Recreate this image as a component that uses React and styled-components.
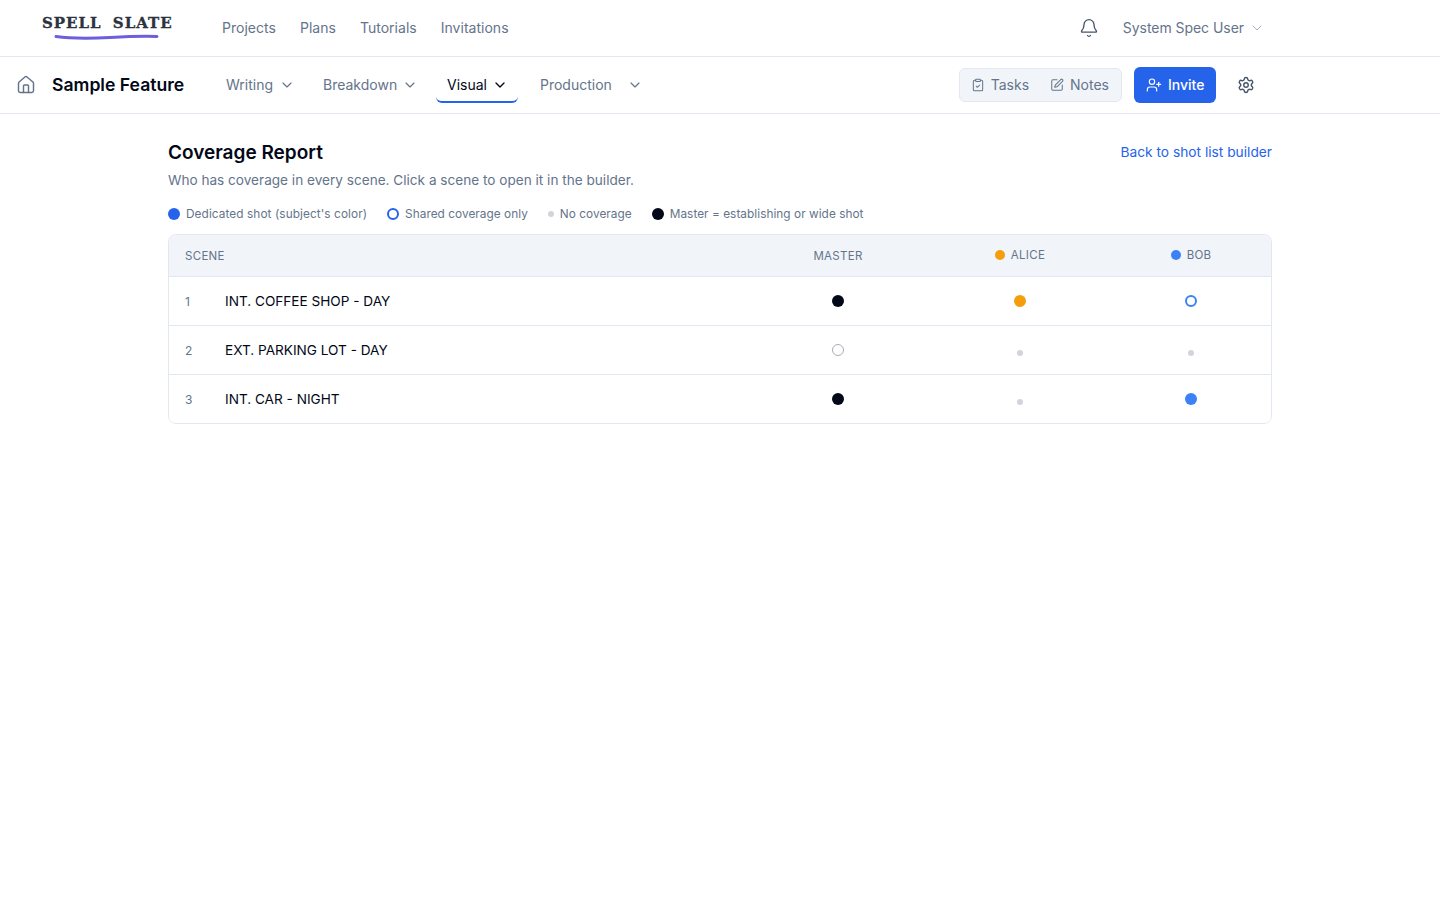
import React from "react";
import styled, { createGlobalStyle } from "styled-components";
import {
  Bell,
  ChevronDown,
  ClipboardCheck,
  House,
  Settings,
  SquarePen,
  UserPlus,
} from "lucide-react";

const GlobalStyle = createGlobalStyle`
  * { box-sizing: border-box; }
  body {
    margin: 0;
    background: #ffffff;
    color: #020817;
    font-family: Inter, "Liberation Sans", sans-serif;
  }
`;

const TopBar = styled.header`
  display: flex;
  align-items: center;
  height: 57px;
  padding: 0 175px 0 42px;
  border-bottom: 1px solid #e2e8f0;
`;

const Logo = styled.a`
  position: relative;
  display: block;
  width: 130px;
  margin: -11px 50px 0 0;
  font-family: "DejaVu Serif", serif;
  font-size: 15px;
  font-weight: 700;
  line-height: 20px;
  letter-spacing: 1px;
  word-spacing: 5px;
  white-space: pre;
  color: #2b3240;
  -webkit-text-stroke: 0.3px #2b3240;

  svg {
    position: absolute;
    left: 12px;
    top: 20px;
  }
`;

const MainNav = styled.nav`
  display: flex;
  gap: 24px;
  flex: 1;
  padding-bottom: 1px;
`;

const MainLink = styled.a`
  font-size: 14px;
  letter-spacing: 0.02px;
  color: #64748b;
`;

const UserArea = styled.div`
  display: flex;
  align-items: center;
  gap: 5px;
  color: #64748b;
  font-size: 14px;

  > svg:first-child {
    margin-right: 19px;
    color: #475569;
  }
`;

const UserName = styled.span`
  padding-bottom: 1px;
  letter-spacing: -0.05px;
`;

const SubBar = styled.div`
  display: flex;
  align-items: center;
  height: 57px;
  padding: 0 185px 0 16px;
  border-bottom: 1px solid #e2e8f0;
`;

const HomeButton = styled.a`
  display: flex;
  color: #64748b;
  margin-right: 16px;
`;

const FeatureTitle = styled.h2`
  margin: 0 31px 0 0;
  width: 132px;
  padding-bottom: 1px;
  font-size: 17.6px;
  font-weight: 600;
  white-space: nowrap;
`;

const Tabs = styled.nav`
  display: flex;
  align-items: center;
  flex: 1;
`;

const Tab = styled.a`
  display: flex;
  align-items: center;
  justify-content: space-between;
  flex: none;
  width: ${(p) => p.$width}px;
  height: 36px;
  margin-right: ${(p) => p.$gap}px;
  padding: 0 10px 0 11px;
  font-size: 14px;
  color: ${(p) => (p.$active ? "#020817" : "#64748b")};
  border-bottom: 2px solid ${(p) => (p.$active ? "#2563eb" : "transparent")};
  border-radius: 0 0 6px 6px;

  svg {
    flex: none;
    margin-top: 1px;
  }
`;

const Toggle = styled.div`
  display: flex;
  align-items: center;
  height: 34px;
  margin-right: 12px;
  padding: 0 12px 0 11px;
  gap: 21px;
  background: #f1f5f9;
  border: 1px solid #e2e8f0;
  border-radius: 6px;
`;

const ToggleItem = styled.a`
  display: flex;
  align-items: center;
  gap: 6px;
  font-size: 14px;
  line-height: 18px;
  padding-bottom: 1px;
  color: #64748b;

  svg {
    margin-top: 1px;
  }
`;

const InviteButton = styled.button`
  display: flex;
  align-items: center;
  gap: 6px;
  width: 82px;
  height: 36px;
  margin-right: 21px;
  padding: 0 0 1px 12px;
  border: none;
  border-radius: 6px;
  background: #2563eb;
  color: #ffffff;
  font-family: inherit;
  font-size: 14px;
  font-weight: 500;

  svg {
    margin-top: 1px;
  }
`;

const GearButton = styled.a`
  display: flex;
  color: #475569;
`;

const Page = styled.main`
  max-width: 1152px;
  margin: 0 auto;
  padding: 24px 24px 0;
`;

const HeadRow = styled.div`
  display: flex;
  justify-content: space-between;
  align-items: flex-start;
`;

const Title = styled.h1`
  margin: 0;
  padding-top: 1px;
  font-size: 19px;
  font-weight: 600;
  line-height: 28px;
`;

const Subtitle = styled.p`
  margin: 3px 0 0;
  font-size: 13.6px;
  line-height: 20px;
  color: #64748b;
`;

const BackLink = styled.a`
  font-size: 13.75px;
  line-height: 28px;
  color: #2563eb;
`;

const Legend = styled.div`
  display: flex;
  align-items: center;
  gap: 20px;
  margin: 16px 0 12px;
  height: 16px;
`;

const LegendItem = styled.span`
  display: flex;
  align-items: center;
  gap: 6px;
  font-size: 11.8px;
  line-height: 14px;
  letter-spacing: ${(p) => p.$track || 0.05}px;
  color: #64748b;
`;

const Dot = styled.span`
  display: block;
  flex: none;
  width: ${(p) => p.$size || 12}px;
  height: ${(p) => p.$size || 12}px;
  border-radius: 50%;
  background: ${(p) => p.$fill || "transparent"};
  border: ${(p) => (p.$ring ? `${p.$thin ? 1 : 2}px solid ${p.$ring}` : "none")};
  margin-top: ${(p) => p.$drop || 0}px;
`;

const TableCard = styled.div`
  border: 1px solid #e2e8f0;
  border-radius: 8px;
  overflow: hidden;
`;

const Row = styled.div`
  display: grid;
  grid-template-columns: 578px 182px 182px 160px;
  align-items: center;
  height: ${(p) => (p.$head ? 42 : 49)}px;
  background: ${(p) => (p.$head ? "#f1f5f9" : "#ffffff")};
  border-bottom: 1px solid #e2e8f0;

  &:last-child {
    height: 48px;
    border-bottom: none;
  }
`;

const SceneHead = styled.div`
  padding-left: 16px;
  font-size: 11.5px;
  letter-spacing: 0.3px;
  color: #64748b;
`;

const ColumnHead = styled.div`
  display: flex;
  justify-content: center;
  align-items: center;
  gap: 6px;
  font-size: 11.5px;
  letter-spacing: 0.3px;
  color: #64748b;
  margin-top: ${(p) => (p.$subject ? -1 : 0)}px;
`;

const SceneCell = styled.div`
  display: flex;
  align-items: center;
  padding-left: 16px;
`;

const SceneNumber = styled.span`
  width: 40px;
  font-size: 12px;
  color: #64748b;
`;

const SceneName = styled.span`
  font-size: 13.6px;
  color: #020817;
`;

const Mark = styled.div`
  display: flex;
  justify-content: center;
`;

const BLUE = "#3b82f6";
const AMBER = "#f59e0b";
const INK = "#020817";

const renderMark = (kind, color) => {
  if (kind === "full") return <Dot $fill={color} />;
  if (kind === "ring") return <Dot $ring={color} />;
  if (kind === "empty") return <Dot $ring="#a8adb5" $thin />;
  return <Dot $size={6} $fill="#d1d5db" $drop={6} />;
};

const scenes = [
  { n: 1, name: "INT. COFFEE SHOP - DAY", master: "full", alice: "full", bob: "ring" },
  { n: 2, name: "EXT. PARKING LOT - DAY", master: "empty", alice: "none", bob: "none" },
  { n: 3, name: "INT. CAR - NIGHT", master: "full", alice: "none", bob: "full" },
];

export default function App() {
  return (
    <>
      <GlobalStyle />
      <TopBar>
        <Logo>
          SPELL SLATE
          <svg width="106" height="8" viewBox="0 0 106 8" fill="none">
            <path
              d="M2 3.5C20 6 36 5.5 56 4.5C72 3.6 88 3 103 3.5"
              stroke="#6d5fdc"
              strokeWidth="3"
              strokeLinecap="round"
            />
          </svg>
        </Logo>
        <MainNav>
          <MainLink>Projects</MainLink>
          <MainLink>Plans</MainLink>
          <MainLink>Tutorials</MainLink>
          <MainLink>Invitations</MainLink>
        </MainNav>
        <UserArea>
          <Bell size={20} strokeWidth={1.6} />
          <UserName>System Spec User</UserName>
          <ChevronDown size={16} strokeWidth={1.25} color="#94a3b8" />
        </UserArea>
      </TopBar>

      <SubBar>
        <HomeButton>
          <House size={20} strokeWidth={1.75} />
        </HomeButton>
        <FeatureTitle>Sample Feature</FeatureTitle>
        <Tabs>
          <Tab $width={90} $gap={7}>
            Writing <ChevronDown size={16} strokeWidth={1.75} />
          </Tab>
          <Tab $width={116} $gap={8}>
            Breakdown <ChevronDown size={16} strokeWidth={1.75} />
          </Tab>
          <Tab $width={82} $gap={11} $active>
            Visual <ChevronDown size={16} strokeWidth={2} color="#020817" />
          </Tab>
          <Tab $width={124} $gap={0}>
            Production <ChevronDown size={16} strokeWidth={1.75} />
          </Tab>
        </Tabs>
        <Toggle>
          <ToggleItem>
            <ClipboardCheck size={14} strokeWidth={1.75} />
            Tasks
          </ToggleItem>
          <ToggleItem>
            <SquarePen size={14} strokeWidth={1.75} />
            Notes
          </ToggleItem>
        </Toggle>
        <InviteButton>
          <UserPlus size={16} strokeWidth={1.75} />
          Invite
        </InviteButton>
        <GearButton>
          <Settings size={18} strokeWidth={1.9} />
        </GearButton>
      </SubBar>

      <Page>
        <HeadRow>
          <div>
            <Title>Coverage Report</Title>
            <Subtitle>Who has coverage in every scene. Click a scene to open it in the builder.</Subtitle>
          </div>
          <BackLink>Back to shot list builder</BackLink>
        </HeadRow>

        <Legend>
          <LegendItem $track={0.09}>
            <Dot $fill="#2563eb" />
            Dedicated shot (subject's color)
          </LegendItem>
          <LegendItem>
            <Dot $ring="#2563eb" />
            Shared coverage only
          </LegendItem>
          <LegendItem>
            <Dot $size={6} $fill="#d1d5db" />
            No coverage
          </LegendItem>
          <LegendItem>
            <Dot $fill={INK} />
            Master = establishing or wide shot
          </LegendItem>
        </Legend>

        <TableCard>
          <Row $head>
            <SceneHead>SCENE</SceneHead>
            <ColumnHead>MASTER</ColumnHead>
            <ColumnHead $subject>
              <Dot $size={10} $fill={AMBER} />
              ALICE
            </ColumnHead>
            <ColumnHead $subject>
              <Dot $size={10} $fill={BLUE} />
              BOB
            </ColumnHead>
          </Row>
          {scenes.map((scene) => (
            <Row key={scene.n}>
              <SceneCell>
                <SceneNumber>{scene.n}</SceneNumber>
                <SceneName>{scene.name}</SceneName>
              </SceneCell>
              <Mark>{renderMark(scene.master, INK)}</Mark>
              <Mark>{renderMark(scene.alice, AMBER)}</Mark>
              <Mark>{renderMark(scene.bob, BLUE)}</Mark>
            </Row>
          ))}
        </TableCard>
      </Page>
    </>
  );
}
